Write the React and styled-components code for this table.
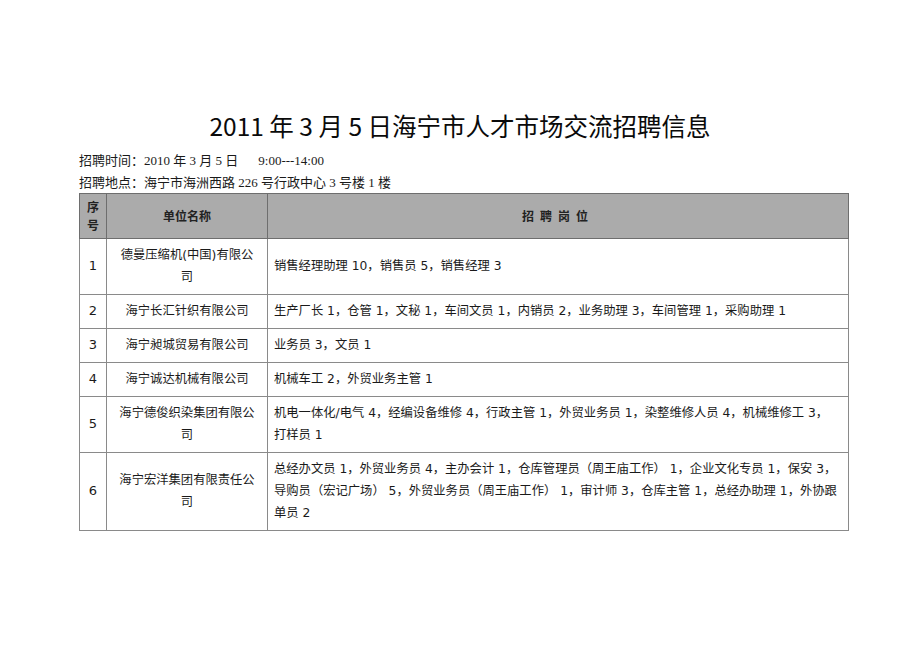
import styled, { createGlobalStyle } from 'styled-components'

const GlobalStyle = createGlobalStyle`
    html, body {
        margin: 0;
        padding: 0;
        background: #ffffff;
    }
    body {
        font-family: "DejaVu Sans", "Noto Sans CJK SC", sans-serif;
        color: #111111;
    }
`

const Page = styled.div`
    width: 920px;
    min-height: 651px;
    padding-top: 108px;
    box-sizing: border-box;
`

const Title = styled.h1`
    margin: 0;
    text-align: center;
    font-family: "Noto Sans CJK SC", sans-serif;
    font-weight: 400;
    font-size: 24.5px;
    line-height: 36px;
    color: #0a0a0a;
`

const Info = styled.div`
    margin: 7px 0 0 79px;
    display: flex;
    flex-direction: column;
    gap: 2px;
    font-family: "Liberation Serif", "Noto Sans CJK SC", serif;
    font-size: 13px;
    line-height: 20px;
    color: #1a1a1a;
`

const Gap = styled.span`
    display: inline-block;
    width: ${p => p.w}px;
`

const Table = styled.table`
    margin-left: 79px;
    width: 770px;
    border-collapse: collapse;
    table-layout: fixed;
    border: 1px solid #6e6e6e;
    font-size: 12.3px;
    line-height: 22px;
    color: #1a1a1a;
`

const HeadCell = styled.th`
    border: 1px solid #6e6e6e;
    background-color: #aaaaaa;
    background-image: repeating-conic-gradient(#a2a2a2 0 25%, #b3b3b3 0 50%);
    background-size: 2px 2px;
    padding: 4px 0;
    font-family: "Noto Sans CJK SC", sans-serif;
    font-weight: 700;
    font-size: 12px;
    line-height: 18px;
    text-align: center;
    color: #222222;
    letter-spacing: ${p => p.spread ? '6px' : '0'};
`

const Cell = styled.td`
    border: 1px solid #8a8a8a;
    padding: ${p => p.align === 'left' ? '5px 3px 6px 6px' : '5px 8px 6px'};
    text-align: ${p => p.align || 'center'};
    vertical-align: middle;
    word-break: break-all;
`

const Num = styled(Cell)`
    padding: 5px 0 6px;
    font-size: 13px;
`

const Line = styled.div`
    white-space: nowrap;
`

const jobs = [
    {
        no: 1,
        name: '德曼压缩机(中国)有限公司',
        posts: ['销售经理助理 10，销售员 5，销售经理 3']
    },
    {
        no: 2,
        name: '海宁长汇针织有限公司',
        posts: ['生产厂长 1，仓管 1，文秘 1，车间文员 1，内销员 2，业务助理 3，车间管理 1，采购助理 1']
    },
    {
        no: 3,
        name: '海宁昶城贸易有限公司',
        posts: ['业务员 3，文员 1']
    },
    {
        no: 4,
        name: '海宁诚达机械有限公司',
        posts: ['机械车工 2，外贸业务主管 1']
    },
    {
        no: 5,
        name: '海宁德俊织染集团有限公司',
        posts: [
            '机电一体化/电气 4，经编设备维修 4，行政主管 1，外贸业务员 1，染整维修人员 4，机械维修工 3，',
            '打样员 1'
        ]
    },
    {
        no: 6,
        name: '海宁宏洋集团有限责任公司',
        posts: [
            '总经办文员 1，外贸业务员 4，主办会计 1，仓库管理员（周王庙工作） 1，企业文化专员 1，保安 3，',
            '导购员（宏记广场） 5，外贸业务员（周王庙工作） 1，审计师 3，仓库主管 1，总经办助理 1，外协跟',
            '单员 2'
        ]
    }
]

const App = () => {
    return (
        <Page>
            <GlobalStyle />
            <Title>2011 年 3 月 5 日海宁市人才市场交流招聘信息</Title>
            <Info>
                <span>招聘时间：2010 年 3 月 5 日<Gap w={20} />9:00---14:00</span>
                <span>招聘地点：海宁市海洲西路 226 号行政中心 3 号楼 1 楼</span>
            </Info>
            <Table>
                <colgroup>
                    <col style={{ width: 27 }} />
                    <col style={{ width: 161 }} />
                    <col />
                </colgroup>
                <thead>
                    <tr>
                        <HeadCell>序<br />号</HeadCell>
                        <HeadCell>单位名称</HeadCell>
                        <HeadCell spread>招聘岗位</HeadCell>
                    </tr>
                </thead>
                <tbody>
                    {
                        jobs.map(job => (
                            <tr key={job.no}>
                                <Num>{job.no}</Num>
                                <Cell>{job.name}</Cell>
                                <Cell align='left'>
                                    {job.posts.map((line, i) => <Line key={i}>{line}</Line>)}
                                </Cell>
                            </tr>
                        ))
                    }
                </tbody>
            </Table>
        </Page>
    )
}

export default App
